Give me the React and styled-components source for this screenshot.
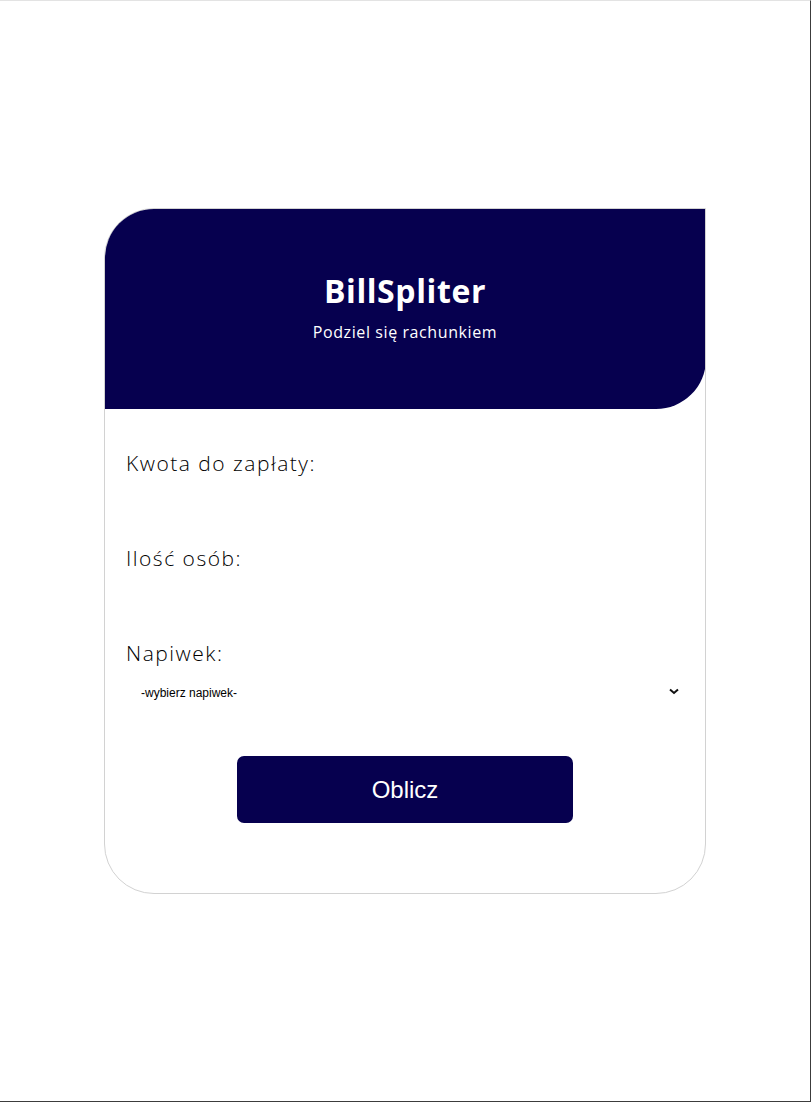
import React, { useState } from "react";
import styled, { createGlobalStyle } from "styled-components";

const GlobalStyle = createGlobalStyle`
  * { box-sizing: border-box; }
  html, body { margin: 0; padding: 0; }
  body {
    background: #fff;
    font-family: "Open Sans", "Noto Sans", sans-serif;
  }
`;

const navy = "#06004f";

const Page = styled.div`
  height: 100vh;
  display: flex;
  align-items: center;
  justify-content: center;
  border-top: 1px solid #e3e3e3;
  border-right: 1px solid #3c3c3c;
  border-bottom: 1px solid #3c3c3c;
`;

const Card = styled.div`
  width: 602px;
  height: 686px;
  border: 1px solid #d2d2d2;
  border-radius: 50px 0 50px 50px;
  display: flex;
  flex-direction: column;
  overflow: hidden;
`;

const Header = styled.header`
  height: 201px;
  margin: -1px -1px 0 -1px;
  background: ${navy};
  border-radius: 50px 0 50px 0;
  color: #fff;
  display: flex;
  flex-direction: column;
  align-items: center;
  justify-content: center;
  padding-bottom: 4px;
`;

const Title = styled.h1`
  margin: 0;
  font-family: "Open Sans", sans-serif;
  font-weight: 700;
  font-size: 32px;
  letter-spacing: 0.6px;
  line-height: 40px;
`;

const Subtitle = styled.p`
  margin: 11px 0 0;
  font-family: "Open Sans", sans-serif;
  font-size: 16px;
  line-height: 20px;
  letter-spacing: 0.6px;
`;

const Form = styled.form`
  display: flex;
  flex-direction: column;
  padding: 40px 21px 0 21px;
`;

const Field = styled.div`
  display: flex;
  flex-direction: column;
  margin-bottom: ${(p) => p.$gap || 0}px;
`;

const Label = styled.label`
  font-family: "Open Sans", sans-serif;
  font-weight: 300;
  font-size: 21px;
  line-height: 28px;
  letter-spacing: 1.5px;
  color: #000;
`;

const Input = styled.input`
  border: none;
  outline: none;
  height: 40px;
  font-size: 16px;
  background: transparent;
  padding: 0 2px;
`;

const SelectWrap = styled.div`
  position: relative;
  margin-top: 13px;
`;

const Select = styled.select`
  appearance: none;
  width: 100%;
  height: 24px;
  border: none;
  outline: none;
  background: transparent;
  font-family: "Liberation Sans", Arial, sans-serif;
  font-size: 12px;
  color: #000;
  padding: 0 15px;
`;

const Chevron = styled.svg`
  position: absolute;
  right: 5px;
  top: 8px;
  pointer-events: none;
`;

const Button = styled.button`
  align-self: center;
  width: 336px;
  height: 67px;
  margin-top: 51px;
  border: none;
  border-radius: 7px;
  background: ${navy};
  color: #fff;
  font-family: "Liberation Sans", Arial, sans-serif;
  font-size: 24px;
  cursor: pointer;
`;

export default function App() {
  const [tip, setTip] = useState("");

  return (
    <>
      <GlobalStyle />
      <Page>
        <Card>
          <Header>
            <Title>BillSpliter</Title>
            <Subtitle>Podziel się rachunkiem</Subtitle>
          </Header>
          <Form onSubmit={(e) => e.preventDefault()}>
            <Field $gap={27}>
              <Label htmlFor="price">Kwota do zapłaty:</Label>
              <Input id="price" type="number" />
            </Field>
            <Field $gap={27}>
              <Label htmlFor="people">Ilość osób:</Label>
              <Input id="people" type="number" />
            </Field>
            <Field>
              <Label htmlFor="tip">Napiwek:</Label>
              <SelectWrap>
                <Select id="tip" value={tip} onChange={(e) => setTip(e.target.value)}>
                  <option value="">-wybierz napiwek-</option>
                  <option value="0.05">5%</option>
                  <option value="0.1">10%</option>
                  <option value="0.15">15%</option>
                </Select>
                <Chevron width="10" height="7" viewBox="0 0 10 7">
                  <path d="M1 1.5 L5 5 L9 1.5" fill="none" stroke="#111" strokeWidth="2" />
                </Chevron>
              </SelectWrap>
            </Field>
            <Button type="submit">Oblicz</Button>
          </Form>
        </Card>
      </Page>
    </>
  );
}
